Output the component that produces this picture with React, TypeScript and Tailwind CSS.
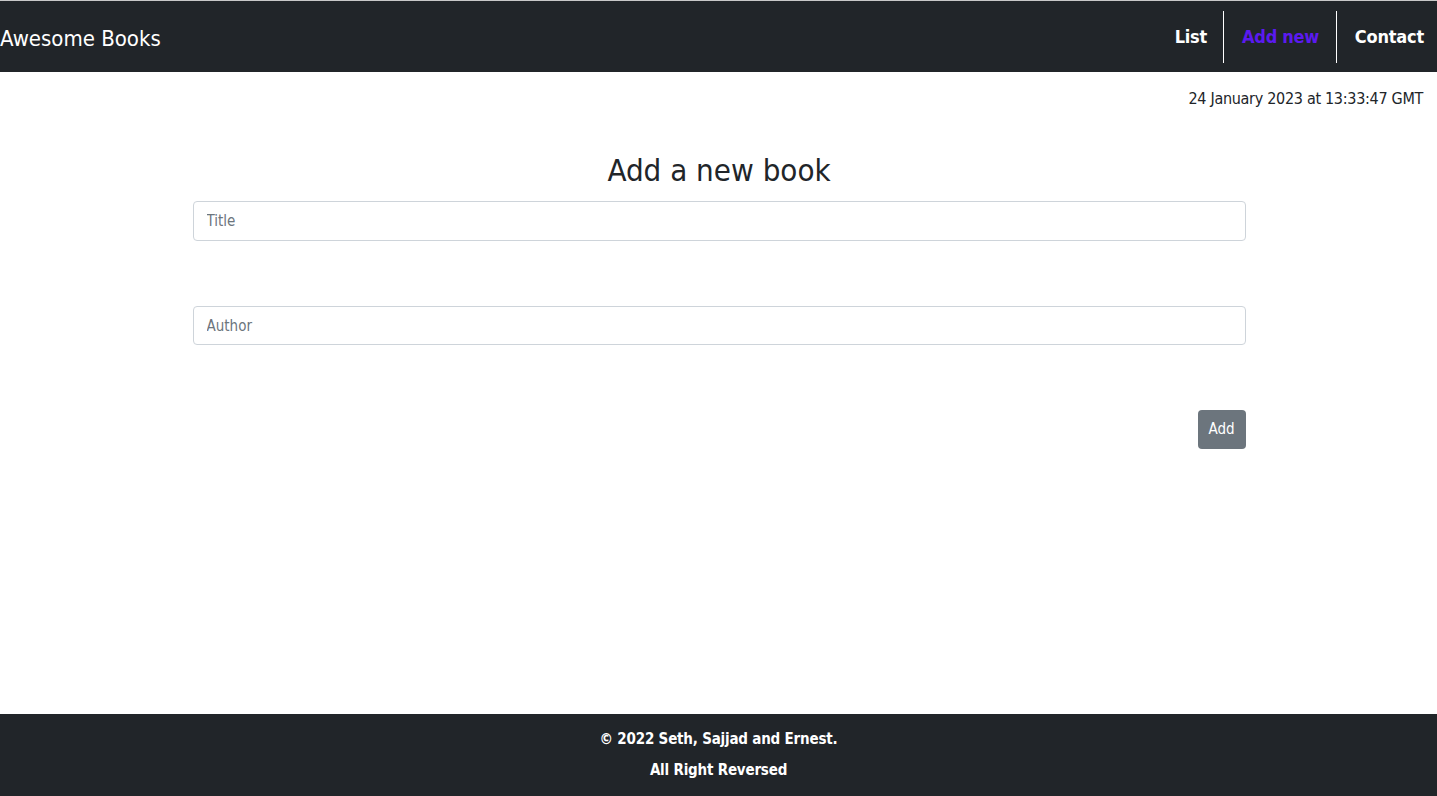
export default function App() {
  return (
    <div className="min-h-screen flex flex-col bg-white text-[#212529] font-['DejaVu_Sans_Condensed','Liberation_Sans',sans-serif]">
      {/* Navigation */}
      <nav className="border-t border-[#c8c8c8] bg-[#212529] h-[72px] flex justify-between items-center">
        <span className="text-[22px] text-white pt-[4px]">Awesome Books</span>
        <ul className="flex items-center h-[52px] pr-[13px]">
          <li className="pl-[17px] pr-[16px] text-[18px] tracking-[-0.2px] font-bold text-white">List</li>
          <li className="h-full border-l border-white"></li>
          <li className="pl-[18px] pr-[17px] text-[18px] tracking-[-0.3px] font-bold text-[#5b1af0]">Add new</li>
          <li className="h-full border-l border-white"></li>
          <li className="pl-[18px] text-[18px] tracking-[-0.2px] font-bold text-white">Contact</li>
        </ul>
      </nav>

      <main className="flex-1 flex flex-col">
        <p className="text-right text-[16px] tracking-[-0.3px] pr-[14px] pt-[15px] leading-[24px]">24 January 2023 at 13:33:47 GMT</p>

        <section className="w-[1054px] mx-auto flex flex-col pt-[39px] pl-px">
          <h1 className="text-center text-[31px] leading-[40px] mb-[11px]">Add a new book</h1>
          <input
            type="text"
            placeholder="Title"
            className="h-[40px] w-full border border-[#ced4da] rounded-[4px] px-[13px] text-[15px] placeholder:text-[#6c757d] outline-none"
          />
          <input
            type="text"
            placeholder="Author"
            className="mt-[65px] h-[39px] w-full border border-[#ced4da] rounded-[4px] px-[13px] text-[15px] placeholder:text-[#6c757d] outline-none"
          />
          <div className="flex justify-end mt-[65px]">
            <button className="h-[39px] w-[48px] bg-[#6c757d] text-white text-[15px] rounded-[4px]">Add</button>
          </div>
        </section>
      </main>

      {/* Footer */}
      <footer className="bg-[#212529] h-[82px] flex flex-col items-center justify-center text-white font-bold text-[15px] tracking-[-0.2px] leading-[31px]">
        <p>© 2022 Seth, Sajjad and Ernest.</p>
        <p>All Right Reversed</p>
      </footer>
    </div>
  )
}
